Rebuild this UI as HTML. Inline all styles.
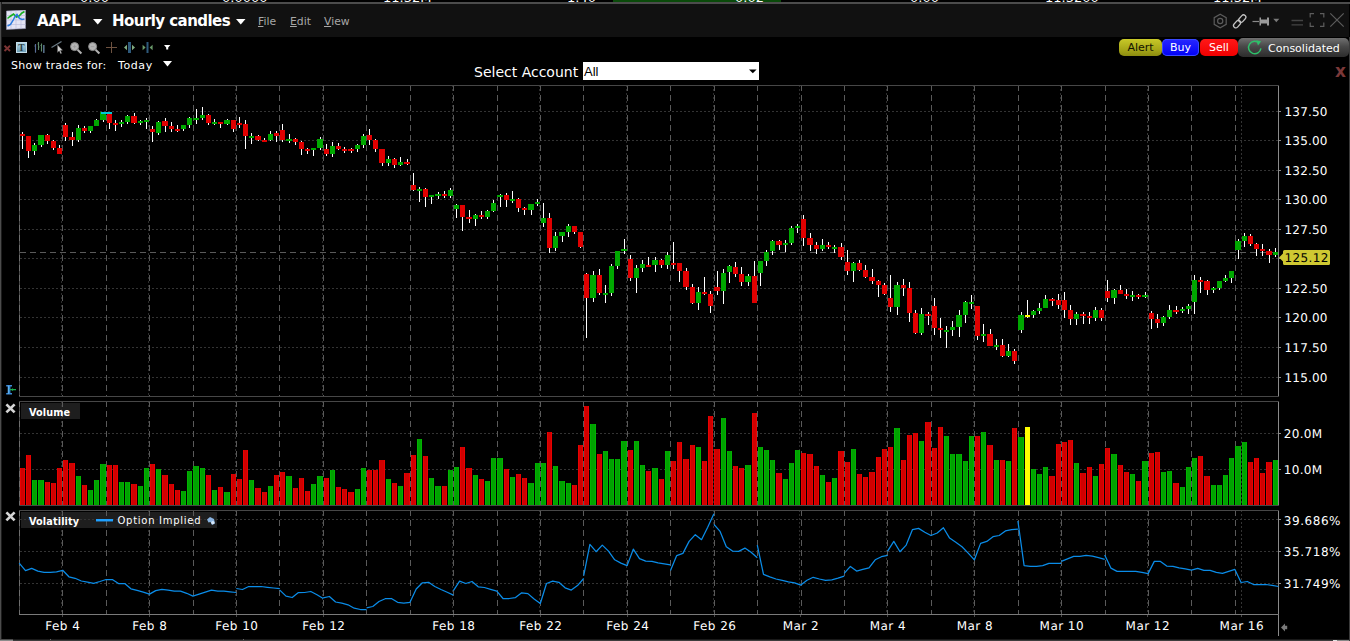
<!DOCTYPE html>
<html><head><meta charset="utf-8"><title>AAPL Hourly candles</title>
<style>
html,body{margin:0;padding:0;background:#000;}
body{width:1350px;height:641px;overflow:hidden;position:relative;font-family:"DejaVu Sans","Liberation Sans",sans-serif;color:#fff;}
.abs{position:absolute;}
.t{position:absolute;white-space:nowrap;line-height:1;}
#topstrip{left:0;top:0;width:1350px;height:2px;background:#000;overflow:hidden;}
#topstrip span{position:absolute;top:-7.6px;font-size:13px;color:#fff;line-height:11px;}
#topline{left:0;top:2px;width:1350px;height:2px;background:#4c4c4c;}
#leftline{left:0;top:2px;width:1px;height:638px;background:#4c4c4c;box-shadow:1px 0 0 #1c1c1c;}
#titlebar{left:1px;top:4px;width:1348px;height:33px;background:#111;}
.menu{font-size:10.8px;color:#a8a8a8;top:16.5px;}
.menu u{text-decoration:underline;}
.btn{position:absolute;top:39px;height:17px;border-radius:5px;font-size:11px;text-align:center;line-height:17px;}
</style></head><body>
<div class="abs" id="topstrip"><span style="left:80px">0.00</span><span style="left:222px">0.0000</span><span style="left:383px">11.32M</span><span style="left:567px">1.40</span><div class="abs" style="left:613px;top:0;width:168px;height:2px;background:#0a4a0a"></div><span style="left:735px">0.02</span><span style="left:910px">0.00</span><span style="left:1045px">11.3200</span><span style="left:1213px">11.32M</span></div>
<div class="abs" id="topline"></div>
<div class="abs" id="titlebar"></div>
<div class="abs" id="leftline"></div>
<!-- app icon -->
<svg class="abs" style="left:6px;top:10px" width="20" height="20" viewBox="0 0 20 20">
<path d="M0.5 1 L19.5 0 L19.5 18.5 L0.5 19.5 Z" fill="#e4e4f4" stroke="#9a9ab8" stroke-width="0.6"/>
<path d="M5 1 V19 M10 .6 V19 M15 .3 V19 M.5 5.5 H19.5 M.5 10 H19.5 M.5 14.5 H19.5" stroke="#b8b8d8" stroke-width=".6" fill="none"/>
<path d="M1.5 8.5 L4 6.5 L7.5 4 L10.5 7 L13 6 L16 3 L18.5 1.5" stroke="#18b020" stroke-width="1.6" fill="none"/>
<path d="M1.5 16 L4.5 14.5 L7 10.5 L9 6.5 L11 4.5 L13.5 8.5 L16 9.5 L18.5 9" stroke="#2a7ae0" stroke-width="1.5" fill="none"/>
</svg>
<div class="t" style="left:37px;top:14px;font-size:15px;font-weight:bold;">AAPL</div>
<svg class="abs" style="left:93px;top:19px" width="10" height="6"><path d="M0 0 H9.5 L4.75 5.5 Z" fill="#fff"/></svg>
<div class="t" style="left:112px;top:14px;font-size:15px;font-weight:bold;letter-spacing:-0.55px;">Hourly candles</div>
<svg class="abs" style="left:236px;top:19px" width="10" height="6"><path d="M0 0 H9.5 L4.75 5.5 Z" fill="#fff"/></svg>
<div class="t menu" style="left:258px"><u>F</u>ile</div>
<div class="t menu" style="left:290px"><u>E</u>dit</div>
<div class="t menu" style="left:324px"><u>V</u>iew</div>
<!-- right title icons -->
<svg class="abs" style="left:1210px;top:10px" width="140" height="22" viewBox="1210 10 140 22" fill="none">
<path d="M1220.2 14.3 L1226.2 17.6 V24.4 L1220.2 27.7 L1214.2 24.4 V17.6 Z" stroke="#5c5c5c" stroke-width="1.2"/>
<circle cx="1220.2" cy="21" r="2.6" stroke="#5c5c5c" stroke-width="1.2"/>
<g stroke="#c4c4c4" stroke-width="1.25"><rect x="-2.3" y="-4.2" width="4.6" height="8.4" rx="2.3" transform="translate(1242.3 18.6) rotate(42)"/><rect x="-2.3" y="-4.2" width="4.6" height="8.4" rx="2.3" transform="translate(1237.1 24.1) rotate(42)"/></g>
<path d="M1252.5 21.5 H1259" stroke="#8a8a8a" stroke-width="1.2"/>
<path d="M1259.5 17.5 H1261 V19.5 H1267 V17.5 H1269 V25.5 H1267 V23.5 H1261 V25.5 H1259.5 Z" fill="#9a9a9a"/>
<path d="M1273.3 18.8 H1279.3 L1276.3 22.3 Z" fill="#7a7a7a"/>
<path d="M1291.5 20.5 H1303 M1291.5 24.8 H1303" stroke="#444" stroke-width="1.3"/>
<path d="M1314 13.6 H1310.2 V17.6 M1320 13.6 H1323.8 V17.6 M1314 26.4 H1310.2 V22.4 M1320 26.4 H1323.8 V22.4" stroke="#5c5c5c" stroke-width="1.2"/>
<path d="M1330.3 13.3 L1343.7 26.7 M1343.7 13.3 L1330.3 26.7" stroke="#5c5c5c" stroke-width="1.2"/>
</svg>
<!-- toolbar -->
<svg class="abs" style="left:0;top:38px" width="180" height="20" viewBox="0 38 180 20" fill="none">
<path d="M4.5 45.8 L10 51 M10 45.8 L4.5 51" stroke="#7c3434" stroke-width="1.9"/>
<defs><linearGradient id="tg" x1="0" y1="0" x2="0" y2="1"><stop offset="0" stop-color="#b4d8e8"/><stop offset="1" stop-color="#6a9cb4"/></linearGradient></defs><rect x="16.5" y="42.5" width="10" height="10" fill="url(#tg)" stroke="#c4dce8" stroke-width="1"/>
<text x="21.5" y="51" font-family="'Liberation Serif',serif" font-size="9.5" font-weight="bold" fill="#2c3c44" text-anchor="middle">T</text>
<path d="M35.5 44 V52.5 M34.5 46 H35.5 M38.5 42 V50 M37.5 44 H38.5 M38.5 47 H39.5 M41.5 43.5 V51.5 M40.5 45.5 H41.5 M43.8 45 V53" stroke="#5f8a6a" stroke-width="1.1"/>
<path d="M35.5 44 V52.5 M43.8 45 V53" stroke="#5a6a9a" stroke-width="1.1"/>
<path d="M51.5 47.5 L61.5 41.5" stroke="#6a7a84" stroke-width="1.2"/>
<path d="M57.5 45 V52.5 L59.2 50.8 L60.6 53.8 L61.7 53.2 L60.4 50.4 L62.6 50.2 Z" fill="#d0d0d0" stroke="#555" stroke-width=".4"/>
<circle cx="74.6" cy="46.6" r="4" fill="#b4b4b4" stroke="#8a8a8a" stroke-width="1"/><path d="M77.6 49.8 L81.4 53.4" stroke="#b0b0b0" stroke-width="2.1"/><path d="M72.8 46.6 H76.4 M74.6 44.8 V48.4" stroke="#9c9c9c" stroke-width=".9"/>
<circle cx="92.6" cy="46.6" r="4" fill="#b4b4b4" stroke="#8a8a8a" stroke-width="1"/><path d="M95.6 49.8 L99.4 53.4" stroke="#b0b0b0" stroke-width="2.1"/><path d="M90.8 46.6 H94.4" stroke="#9c9c9c" stroke-width=".9"/>
<path d="M106 47.5 H117 M111.5 42 V53" stroke="#6e5240" stroke-width="1" shape-rendering="crispEdges"/>
<path d="M129.5 42 V53" stroke="#2e5a7c" stroke-width="3"/><path d="M124 47.5 L127 44.8 V50.2 Z M135 47.5 L132 44.8 V50.2 Z" fill="#80aa80"/>
<path d="M147.5 42 V53" stroke="#2e5a7c" stroke-width="2"/><path d="M145.6 47.5 L142.6 44.8 V50.2 Z M149.6 47.5 L152.6 44.8 V50.2 Z" fill="#6a9a6a"/>
<path d="M164 45 H170.4 L168.2 47.6 V49.6 H166.2 V47.6 Z" fill="#fff"/>
</svg>
<div class="t" style="left:11px;top:59.5px;font-size:11px;letter-spacing:0.33px;">Show trades for:</div>
<div class="t" style="left:118px;top:59.5px;font-size:11px;letter-spacing:0.6px;">Today</div>
<svg class="abs" style="left:163px;top:61px" width="10" height="7"><path d="M0 0 H9 L4.5 5.6 Z" fill="#fff"/></svg>
<!-- select account -->
<div class="t" style="left:474px;top:65px;font-size:14px;">Select Account</div>
<div class="abs" style="left:583px;top:62px;width:176px;height:18px;background:#fff;"></div>
<div class="t" style="left:584px;top:65px;font-size:13px;color:#000;font-family:'Liberation Sans',sans-serif;">All</div>
<svg class="abs" style="left:748px;top:68px" width="10" height="6"><path d="M1 1.5 H8.6 L4.8 5.3 Z" fill="#000"/></svg>
<!-- buttons -->
<div class="btn" style="left:1119px;width:43px;background:linear-gradient(#c8c828,#a8a818 60%,#8c8c10);color:#141400;">Alert</div>
<div class="btn" style="left:1162px;width:37px;background:linear-gradient(#2828ff,#0000f4);color:#fff;box-shadow:inset 0 0 0 1px #3a4aff;">Buy</div>
<div class="btn" style="left:1200px;width:38px;background:linear-gradient(#ff1818,#f00000);color:#fff;">Sell</div>
<div class="btn" style="left:1238px;top:38px;width:111px;height:19px;background:linear-gradient(#707070,#484848 45%,#2c2c2c);color:#fff;"></div>
<svg class="abs" style="left:1246px;top:39px" width="18" height="18" viewBox="0 0 18 18" fill="none"><path d="M13.2 4.2 A6.2 6.2 0 1 0 14.9 9.4" stroke="#2ec06a" stroke-width="1.5"/><path d="M10.2 1.2 L15.2 2.2 L12 6.4 Z" fill="#2ec06a"/></svg>
<div class="t" style="left:1268px;top:42.5px;font-size:11px;">Consolidated</div>
<div class="t" style="left:1335px;top:62.5px;font-size:17px;font-weight:bold;color:#7c3838;">x</div>
<svg width="1350" height="641" viewBox="0 0 1350 641" style="position:absolute;left:0;top:0" shape-rendering="crispEdges">
<defs><linearGradient id="gr" x1="0" x2="1" y1="0" y2="0"><stop offset="0" stop-color="#ea0000"/><stop offset=".2" stop-color="#ea0000"/><stop offset=".2" stop-color="#d00000"/><stop offset=".8" stop-color="#d00000"/><stop offset=".8" stop-color="#ea0000"/></linearGradient><linearGradient id="gg" x1="0" x2="1" y1="0" y2="0"><stop offset="0" stop-color="#00b400"/><stop offset=".2" stop-color="#00b400"/><stop offset=".2" stop-color="#00a200"/><stop offset=".8" stop-color="#00a200"/><stop offset=".8" stop-color="#00b400"/></linearGradient></defs>
<rect x="21" y="403" width="59" height="16" fill="#1e1e1e"/><rect x="21" y="512" width="196" height="16" fill="#1e1e1e"/>
<line x1="20" y1="111.5" x2="1278" y2="111.5" stroke="#333333" stroke-dasharray="2 2"/>
<line x1="20" y1="140.5" x2="1278" y2="140.5" stroke="#333333" stroke-dasharray="2 2"/>
<line x1="20" y1="170.5" x2="1278" y2="170.5" stroke="#333333" stroke-dasharray="2 2"/>
<line x1="20" y1="199.5" x2="1278" y2="199.5" stroke="#333333" stroke-dasharray="2 2"/>
<line x1="20" y1="229.5" x2="1278" y2="229.5" stroke="#333333" stroke-dasharray="2 2"/>
<line x1="20" y1="258.5" x2="1278" y2="258.5" stroke="#333333" stroke-dasharray="2 2"/>
<line x1="20" y1="288.5" x2="1278" y2="288.5" stroke="#333333" stroke-dasharray="2 2"/>
<line x1="20" y1="317.5" x2="1278" y2="317.5" stroke="#333333" stroke-dasharray="2 2"/>
<line x1="20" y1="347.5" x2="1278" y2="347.5" stroke="#333333" stroke-dasharray="2 2"/>
<line x1="20" y1="377.5" x2="1278" y2="377.5" stroke="#333333" stroke-dasharray="2 2"/>
<line x1="20" y1="433.5" x2="1278" y2="433.5" stroke="#333333" stroke-dasharray="2 2"/>
<line x1="20" y1="469.5" x2="1278" y2="469.5" stroke="#333333" stroke-dasharray="2 2"/>
<line x1="20" y1="519.5" x2="1278" y2="519.5" stroke="#333333" stroke-dasharray="2 2"/>
<line x1="20" y1="551.5" x2="1278" y2="551.5" stroke="#333333" stroke-dasharray="2 2"/>
<line x1="20" y1="583.5" x2="1278" y2="583.5" stroke="#333333" stroke-dasharray="2 2"/>
<line x1="20" y1="252.5" x2="1278" y2="252.5" stroke="#5a5a5a" stroke-dasharray="6 4"/>
<line x1="62.5" y1="85" x2="62.5" y2="396" stroke="#5a5a5a" stroke-dasharray="6 4"/>
<line x1="62.5" y1="401" x2="62.5" y2="505" stroke="#5a5a5a" stroke-dasharray="6 4"/>
<line x1="62.5" y1="510" x2="62.5" y2="614" stroke="#5a5a5a" stroke-dasharray="6 4"/>
<line x1="106.5" y1="85" x2="106.5" y2="396" stroke="#5a5a5a" stroke-dasharray="6 4"/>
<line x1="106.5" y1="401" x2="106.5" y2="505" stroke="#5a5a5a" stroke-dasharray="6 4"/>
<line x1="106.5" y1="510" x2="106.5" y2="614" stroke="#5a5a5a" stroke-dasharray="6 4"/>
<line x1="149.5" y1="85" x2="149.5" y2="396" stroke="#5a5a5a" stroke-dasharray="6 4"/>
<line x1="149.5" y1="401" x2="149.5" y2="505" stroke="#5a5a5a" stroke-dasharray="6 4"/>
<line x1="149.5" y1="510" x2="149.5" y2="614" stroke="#5a5a5a" stroke-dasharray="6 4"/>
<line x1="193.5" y1="85" x2="193.5" y2="396" stroke="#5a5a5a" stroke-dasharray="6 4"/>
<line x1="193.5" y1="401" x2="193.5" y2="505" stroke="#5a5a5a" stroke-dasharray="6 4"/>
<line x1="193.5" y1="510" x2="193.5" y2="614" stroke="#5a5a5a" stroke-dasharray="6 4"/>
<line x1="236.5" y1="85" x2="236.5" y2="396" stroke="#5a5a5a" stroke-dasharray="6 4"/>
<line x1="236.5" y1="401" x2="236.5" y2="505" stroke="#5a5a5a" stroke-dasharray="6 4"/>
<line x1="236.5" y1="510" x2="236.5" y2="614" stroke="#5a5a5a" stroke-dasharray="6 4"/>
<line x1="279.5" y1="85" x2="279.5" y2="396" stroke="#5a5a5a" stroke-dasharray="6 4"/>
<line x1="279.5" y1="401" x2="279.5" y2="505" stroke="#5a5a5a" stroke-dasharray="6 4"/>
<line x1="279.5" y1="510" x2="279.5" y2="614" stroke="#5a5a5a" stroke-dasharray="6 4"/>
<line x1="323.5" y1="85" x2="323.5" y2="396" stroke="#5a5a5a" stroke-dasharray="6 4"/>
<line x1="323.5" y1="401" x2="323.5" y2="505" stroke="#5a5a5a" stroke-dasharray="6 4"/>
<line x1="323.5" y1="510" x2="323.5" y2="614" stroke="#5a5a5a" stroke-dasharray="6 4"/>
<line x1="366.5" y1="85" x2="366.5" y2="396" stroke="#5a5a5a" stroke-dasharray="6 4"/>
<line x1="366.5" y1="401" x2="366.5" y2="505" stroke="#5a5a5a" stroke-dasharray="6 4"/>
<line x1="366.5" y1="510" x2="366.5" y2="614" stroke="#5a5a5a" stroke-dasharray="6 4"/>
<line x1="410.5" y1="85" x2="410.5" y2="396" stroke="#5a5a5a" stroke-dasharray="6 4"/>
<line x1="410.5" y1="401" x2="410.5" y2="505" stroke="#5a5a5a" stroke-dasharray="6 4"/>
<line x1="410.5" y1="510" x2="410.5" y2="614" stroke="#5a5a5a" stroke-dasharray="6 4"/>
<line x1="453.5" y1="85" x2="453.5" y2="396" stroke="#5a5a5a" stroke-dasharray="6 4"/>
<line x1="453.5" y1="401" x2="453.5" y2="505" stroke="#5a5a5a" stroke-dasharray="6 4"/>
<line x1="453.5" y1="510" x2="453.5" y2="614" stroke="#5a5a5a" stroke-dasharray="6 4"/>
<line x1="497.5" y1="85" x2="497.5" y2="396" stroke="#5a5a5a" stroke-dasharray="6 4"/>
<line x1="497.5" y1="401" x2="497.5" y2="505" stroke="#5a5a5a" stroke-dasharray="6 4"/>
<line x1="497.5" y1="510" x2="497.5" y2="614" stroke="#5a5a5a" stroke-dasharray="6 4"/>
<line x1="540.5" y1="85" x2="540.5" y2="396" stroke="#5a5a5a" stroke-dasharray="6 4"/>
<line x1="540.5" y1="401" x2="540.5" y2="505" stroke="#5a5a5a" stroke-dasharray="6 4"/>
<line x1="540.5" y1="510" x2="540.5" y2="614" stroke="#5a5a5a" stroke-dasharray="6 4"/>
<line x1="583.5" y1="85" x2="583.5" y2="396" stroke="#5a5a5a" stroke-dasharray="6 4"/>
<line x1="583.5" y1="401" x2="583.5" y2="505" stroke="#5a5a5a" stroke-dasharray="6 4"/>
<line x1="583.5" y1="510" x2="583.5" y2="614" stroke="#5a5a5a" stroke-dasharray="6 4"/>
<line x1="627.5" y1="85" x2="627.5" y2="396" stroke="#5a5a5a" stroke-dasharray="6 4"/>
<line x1="627.5" y1="401" x2="627.5" y2="505" stroke="#5a5a5a" stroke-dasharray="6 4"/>
<line x1="627.5" y1="510" x2="627.5" y2="614" stroke="#5a5a5a" stroke-dasharray="6 4"/>
<line x1="670.5" y1="85" x2="670.5" y2="396" stroke="#5a5a5a" stroke-dasharray="6 4"/>
<line x1="670.5" y1="401" x2="670.5" y2="505" stroke="#5a5a5a" stroke-dasharray="6 4"/>
<line x1="670.5" y1="510" x2="670.5" y2="614" stroke="#5a5a5a" stroke-dasharray="6 4"/>
<line x1="714.5" y1="85" x2="714.5" y2="396" stroke="#5a5a5a" stroke-dasharray="6 4"/>
<line x1="714.5" y1="401" x2="714.5" y2="505" stroke="#5a5a5a" stroke-dasharray="6 4"/>
<line x1="714.5" y1="510" x2="714.5" y2="614" stroke="#5a5a5a" stroke-dasharray="6 4"/>
<line x1="757.5" y1="85" x2="757.5" y2="396" stroke="#5a5a5a" stroke-dasharray="6 4"/>
<line x1="757.5" y1="401" x2="757.5" y2="505" stroke="#5a5a5a" stroke-dasharray="6 4"/>
<line x1="757.5" y1="510" x2="757.5" y2="614" stroke="#5a5a5a" stroke-dasharray="6 4"/>
<line x1="801.5" y1="85" x2="801.5" y2="396" stroke="#5a5a5a" stroke-dasharray="6 4"/>
<line x1="801.5" y1="401" x2="801.5" y2="505" stroke="#5a5a5a" stroke-dasharray="6 4"/>
<line x1="801.5" y1="510" x2="801.5" y2="614" stroke="#5a5a5a" stroke-dasharray="6 4"/>
<line x1="844.5" y1="85" x2="844.5" y2="396" stroke="#5a5a5a" stroke-dasharray="6 4"/>
<line x1="844.5" y1="401" x2="844.5" y2="505" stroke="#5a5a5a" stroke-dasharray="6 4"/>
<line x1="844.5" y1="510" x2="844.5" y2="614" stroke="#5a5a5a" stroke-dasharray="6 4"/>
<line x1="887.5" y1="85" x2="887.5" y2="396" stroke="#5a5a5a" stroke-dasharray="6 4"/>
<line x1="887.5" y1="401" x2="887.5" y2="505" stroke="#5a5a5a" stroke-dasharray="6 4"/>
<line x1="887.5" y1="510" x2="887.5" y2="614" stroke="#5a5a5a" stroke-dasharray="6 4"/>
<line x1="931.5" y1="85" x2="931.5" y2="396" stroke="#5a5a5a" stroke-dasharray="6 4"/>
<line x1="931.5" y1="401" x2="931.5" y2="505" stroke="#5a5a5a" stroke-dasharray="6 4"/>
<line x1="931.5" y1="510" x2="931.5" y2="614" stroke="#5a5a5a" stroke-dasharray="6 4"/>
<line x1="974.5" y1="85" x2="974.5" y2="396" stroke="#5a5a5a" stroke-dasharray="6 4"/>
<line x1="974.5" y1="401" x2="974.5" y2="505" stroke="#5a5a5a" stroke-dasharray="6 4"/>
<line x1="974.5" y1="510" x2="974.5" y2="614" stroke="#5a5a5a" stroke-dasharray="6 4"/>
<line x1="1018.5" y1="85" x2="1018.5" y2="396" stroke="#5a5a5a" stroke-dasharray="6 4"/>
<line x1="1018.5" y1="401" x2="1018.5" y2="505" stroke="#5a5a5a" stroke-dasharray="6 4"/>
<line x1="1018.5" y1="510" x2="1018.5" y2="614" stroke="#5a5a5a" stroke-dasharray="6 4"/>
<line x1="1061.5" y1="85" x2="1061.5" y2="396" stroke="#5a5a5a" stroke-dasharray="6 4"/>
<line x1="1061.5" y1="401" x2="1061.5" y2="505" stroke="#5a5a5a" stroke-dasharray="6 4"/>
<line x1="1061.5" y1="510" x2="1061.5" y2="614" stroke="#5a5a5a" stroke-dasharray="6 4"/>
<line x1="1105.5" y1="85" x2="1105.5" y2="396" stroke="#5a5a5a" stroke-dasharray="6 4"/>
<line x1="1105.5" y1="401" x2="1105.5" y2="505" stroke="#5a5a5a" stroke-dasharray="6 4"/>
<line x1="1105.5" y1="510" x2="1105.5" y2="614" stroke="#5a5a5a" stroke-dasharray="6 4"/>
<line x1="1148.5" y1="85" x2="1148.5" y2="396" stroke="#5a5a5a" stroke-dasharray="6 4"/>
<line x1="1148.5" y1="401" x2="1148.5" y2="505" stroke="#5a5a5a" stroke-dasharray="6 4"/>
<line x1="1148.5" y1="510" x2="1148.5" y2="614" stroke="#5a5a5a" stroke-dasharray="6 4"/>
<line x1="1191.5" y1="85" x2="1191.5" y2="396" stroke="#5a5a5a" stroke-dasharray="6 4"/>
<line x1="1191.5" y1="401" x2="1191.5" y2="505" stroke="#5a5a5a" stroke-dasharray="6 4"/>
<line x1="1191.5" y1="510" x2="1191.5" y2="614" stroke="#5a5a5a" stroke-dasharray="6 4"/>
<line x1="1235.5" y1="85" x2="1235.5" y2="396" stroke="#5a5a5a" stroke-dasharray="6 4"/>
<line x1="1235.5" y1="401" x2="1235.5" y2="505" stroke="#5a5a5a" stroke-dasharray="6 4"/>
<line x1="1235.5" y1="510" x2="1235.5" y2="614" stroke="#5a5a5a" stroke-dasharray="6 4"/>
<line x1="61.5" y1="85" x2="61.5" y2="396" stroke="#2c2c2c" stroke-dasharray="2 2"/>
<line x1="61.5" y1="401" x2="61.5" y2="505" stroke="#2c2c2c" stroke-dasharray="2 2"/>
<line x1="61.5" y1="510" x2="61.5" y2="614" stroke="#2c2c2c" stroke-dasharray="2 2"/>
<line x1="148.5" y1="85" x2="148.5" y2="396" stroke="#2c2c2c" stroke-dasharray="2 2"/>
<line x1="148.5" y1="401" x2="148.5" y2="505" stroke="#2c2c2c" stroke-dasharray="2 2"/>
<line x1="148.5" y1="510" x2="148.5" y2="614" stroke="#2c2c2c" stroke-dasharray="2 2"/>
<line x1="235.5" y1="85" x2="235.5" y2="396" stroke="#2c2c2c" stroke-dasharray="2 2"/>
<line x1="235.5" y1="401" x2="235.5" y2="505" stroke="#2c2c2c" stroke-dasharray="2 2"/>
<line x1="235.5" y1="510" x2="235.5" y2="614" stroke="#2c2c2c" stroke-dasharray="2 2"/>
<line x1="322.5" y1="85" x2="322.5" y2="396" stroke="#2c2c2c" stroke-dasharray="2 2"/>
<line x1="322.5" y1="401" x2="322.5" y2="505" stroke="#2c2c2c" stroke-dasharray="2 2"/>
<line x1="322.5" y1="510" x2="322.5" y2="614" stroke="#2c2c2c" stroke-dasharray="2 2"/>
<line x1="452.5" y1="85" x2="452.5" y2="396" stroke="#2c2c2c" stroke-dasharray="2 2"/>
<line x1="452.5" y1="401" x2="452.5" y2="505" stroke="#2c2c2c" stroke-dasharray="2 2"/>
<line x1="452.5" y1="510" x2="452.5" y2="614" stroke="#2c2c2c" stroke-dasharray="2 2"/>
<line x1="539.5" y1="85" x2="539.5" y2="396" stroke="#2c2c2c" stroke-dasharray="2 2"/>
<line x1="539.5" y1="401" x2="539.5" y2="505" stroke="#2c2c2c" stroke-dasharray="2 2"/>
<line x1="539.5" y1="510" x2="539.5" y2="614" stroke="#2c2c2c" stroke-dasharray="2 2"/>
<line x1="626.5" y1="85" x2="626.5" y2="396" stroke="#2c2c2c" stroke-dasharray="2 2"/>
<line x1="626.5" y1="401" x2="626.5" y2="505" stroke="#2c2c2c" stroke-dasharray="2 2"/>
<line x1="626.5" y1="510" x2="626.5" y2="614" stroke="#2c2c2c" stroke-dasharray="2 2"/>
<line x1="713.5" y1="85" x2="713.5" y2="396" stroke="#2c2c2c" stroke-dasharray="2 2"/>
<line x1="713.5" y1="401" x2="713.5" y2="505" stroke="#2c2c2c" stroke-dasharray="2 2"/>
<line x1="713.5" y1="510" x2="713.5" y2="614" stroke="#2c2c2c" stroke-dasharray="2 2"/>
<line x1="799.5" y1="85" x2="799.5" y2="396" stroke="#2c2c2c" stroke-dasharray="2 2"/>
<line x1="799.5" y1="401" x2="799.5" y2="505" stroke="#2c2c2c" stroke-dasharray="2 2"/>
<line x1="799.5" y1="510" x2="799.5" y2="614" stroke="#2c2c2c" stroke-dasharray="2 2"/>
<line x1="886.5" y1="85" x2="886.5" y2="396" stroke="#2c2c2c" stroke-dasharray="2 2"/>
<line x1="886.5" y1="401" x2="886.5" y2="505" stroke="#2c2c2c" stroke-dasharray="2 2"/>
<line x1="886.5" y1="510" x2="886.5" y2="614" stroke="#2c2c2c" stroke-dasharray="2 2"/>
<line x1="973.5" y1="85" x2="973.5" y2="396" stroke="#2c2c2c" stroke-dasharray="2 2"/>
<line x1="973.5" y1="401" x2="973.5" y2="505" stroke="#2c2c2c" stroke-dasharray="2 2"/>
<line x1="973.5" y1="510" x2="973.5" y2="614" stroke="#2c2c2c" stroke-dasharray="2 2"/>
<line x1="1060.5" y1="85" x2="1060.5" y2="396" stroke="#2c2c2c" stroke-dasharray="2 2"/>
<line x1="1060.5" y1="401" x2="1060.5" y2="505" stroke="#2c2c2c" stroke-dasharray="2 2"/>
<line x1="1060.5" y1="510" x2="1060.5" y2="614" stroke="#2c2c2c" stroke-dasharray="2 2"/>
<line x1="1241.5" y1="85" x2="1241.5" y2="396" stroke="#333333" stroke-dasharray="2 2"/>
<line x1="1241.5" y1="401" x2="1241.5" y2="505" stroke="#333333" stroke-dasharray="2 2"/>
<line x1="1241.5" y1="510" x2="1241.5" y2="614" stroke="#333333" stroke-dasharray="2 2"/>
<line x1="1147.5" y1="85" x2="1147.5" y2="396" stroke="#333333" stroke-dasharray="2 2"/>
<line x1="1147.5" y1="401" x2="1147.5" y2="505" stroke="#333333" stroke-dasharray="2 2"/>
<line x1="1147.5" y1="510" x2="1147.5" y2="614" stroke="#333333" stroke-dasharray="2 2"/>
<rect x="20" y="468" width="5" height="37" fill="url(#gr)"/>
<rect x="26" y="455" width="5" height="50" fill="url(#gr)"/>
<rect x="32" y="480" width="5" height="25" fill="url(#gg)"/>
<rect x="38" y="480" width="6" height="25" fill="url(#gg)"/>
<rect x="45" y="482" width="5" height="23" fill="url(#gr)"/>
<rect x="51" y="483" width="5" height="22" fill="url(#gr)"/>
<rect x="57" y="468" width="5" height="37" fill="url(#gr)"/>
<rect x="63" y="460" width="5" height="45" fill="url(#gr)"/>
<rect x="69" y="463" width="6" height="42" fill="url(#gr)"/>
<rect x="76" y="476" width="5" height="29" fill="url(#gg)"/>
<rect x="82" y="485" width="5" height="20" fill="url(#gr)"/>
<rect x="88" y="490" width="5" height="15" fill="url(#gg)"/>
<rect x="94" y="480" width="5" height="25" fill="url(#gg)"/>
<rect x="100" y="464" width="6" height="41" fill="url(#gg)"/>
<rect x="107" y="465" width="5" height="40" fill="url(#gr)"/>
<rect x="113" y="465" width="5" height="40" fill="url(#gr)"/>
<rect x="119" y="482" width="5" height="23" fill="url(#gg)"/>
<rect x="125" y="482" width="5" height="23" fill="url(#gg)"/>
<rect x="131" y="484" width="6" height="21" fill="url(#gr)"/>
<rect x="138" y="486" width="5" height="19" fill="url(#gg)"/>
<rect x="144" y="468" width="5" height="37" fill="url(#gg)"/>
<rect x="150" y="464" width="5" height="41" fill="url(#gr)"/>
<rect x="156" y="469" width="5" height="36" fill="url(#gg)"/>
<rect x="162" y="475" width="6" height="30" fill="url(#gr)"/>
<rect x="169" y="484" width="5" height="21" fill="url(#gr)"/>
<rect x="175" y="490" width="5" height="15" fill="url(#gr)"/>
<rect x="181" y="491" width="5" height="14" fill="url(#gg)"/>
<rect x="187" y="471" width="5" height="34" fill="url(#gg)"/>
<rect x="193" y="466" width="6" height="39" fill="url(#gg)"/>
<rect x="200" y="468" width="5" height="37" fill="url(#gg)"/>
<rect x="206" y="475" width="5" height="30" fill="url(#gr)"/>
<rect x="212" y="490" width="5" height="15" fill="url(#gg)"/>
<rect x="218" y="487" width="5" height="18" fill="url(#gr)"/>
<rect x="224" y="492" width="6" height="13" fill="url(#gg)"/>
<rect x="231" y="474" width="5" height="31" fill="url(#gr)"/>
<rect x="237" y="479" width="5" height="26" fill="url(#gr)"/>
<rect x="243" y="450" width="5" height="55" fill="url(#gr)"/>
<rect x="249" y="480" width="5" height="25" fill="url(#gg)"/>
<rect x="255" y="488" width="6" height="17" fill="url(#gr)"/>
<rect x="262" y="492" width="5" height="13" fill="url(#gr)"/>
<rect x="268" y="486" width="5" height="19" fill="url(#gg)"/>
<rect x="274" y="475" width="5" height="30" fill="url(#gr)"/>
<rect x="280" y="472" width="5" height="33" fill="url(#gr)"/>
<rect x="286" y="476" width="6" height="29" fill="url(#gg)"/>
<rect x="293" y="488" width="5" height="17" fill="url(#gr)"/>
<rect x="299" y="478" width="5" height="27" fill="url(#gr)"/>
<rect x="305" y="491" width="5" height="14" fill="url(#gr)"/>
<rect x="311" y="484" width="5" height="21" fill="url(#gg)"/>
<rect x="317" y="476" width="6" height="29" fill="url(#gg)"/>
<rect x="324" y="478" width="5" height="27" fill="url(#gr)"/>
<rect x="330" y="470" width="5" height="35" fill="url(#gg)"/>
<rect x="336" y="487" width="5" height="18" fill="url(#gr)"/>
<rect x="342" y="489" width="5" height="16" fill="url(#gr)"/>
<rect x="348" y="492" width="6" height="13" fill="url(#gr)"/>
<rect x="355" y="489" width="5" height="16" fill="url(#gg)"/>
<rect x="361" y="468" width="5" height="37" fill="url(#gg)"/>
<rect x="367" y="470" width="5" height="35" fill="url(#gr)"/>
<rect x="373" y="470" width="5" height="35" fill="url(#gr)"/>
<rect x="379" y="460" width="6" height="45" fill="url(#gr)"/>
<rect x="386" y="479" width="5" height="26" fill="url(#gg)"/>
<rect x="392" y="483" width="5" height="22" fill="url(#gr)"/>
<rect x="398" y="486" width="5" height="19" fill="url(#gg)"/>
<rect x="404" y="473" width="6" height="32" fill="url(#gr)"/>
<rect x="411" y="455" width="5" height="50" fill="url(#gr)"/>
<rect x="417" y="439" width="5" height="66" fill="url(#gg)"/>
<rect x="423" y="456" width="5" height="49" fill="url(#gr)"/>
<rect x="429" y="478" width="5" height="27" fill="url(#gg)"/>
<rect x="435" y="486" width="6" height="19" fill="url(#gg)"/>
<rect x="442" y="486" width="5" height="19" fill="url(#gr)"/>
<rect x="448" y="470" width="5" height="35" fill="url(#gg)"/>
<rect x="454" y="467" width="5" height="38" fill="url(#gg)"/>
<rect x="460" y="447" width="5" height="58" fill="url(#gr)"/>
<rect x="466" y="468" width="6" height="37" fill="url(#gr)"/>
<rect x="473" y="475" width="5" height="30" fill="url(#gg)"/>
<rect x="479" y="479" width="5" height="26" fill="url(#gr)"/>
<rect x="485" y="481" width="5" height="24" fill="url(#gg)"/>
<rect x="491" y="458" width="5" height="47" fill="url(#gg)"/>
<rect x="497" y="458" width="6" height="47" fill="url(#gg)"/>
<rect x="504" y="469" width="5" height="36" fill="url(#gr)"/>
<rect x="510" y="477" width="5" height="28" fill="url(#gg)"/>
<rect x="516" y="474" width="5" height="31" fill="url(#gr)"/>
<rect x="522" y="478" width="5" height="27" fill="url(#gr)"/>
<rect x="528" y="483" width="6" height="22" fill="url(#gg)"/>
<rect x="535" y="463" width="5" height="42" fill="url(#gg)"/>
<rect x="541" y="463" width="5" height="42" fill="url(#gg)"/>
<rect x="547" y="432" width="5" height="73" fill="url(#gr)"/>
<rect x="553" y="466" width="5" height="39" fill="url(#gg)"/>
<rect x="559" y="481" width="6" height="24" fill="url(#gg)"/>
<rect x="566" y="483" width="5" height="22" fill="url(#gg)"/>
<rect x="572" y="485" width="5" height="20" fill="url(#gr)"/>
<rect x="578" y="445" width="5" height="60" fill="url(#gr)"/>
<rect x="584" y="406" width="5" height="99" fill="url(#gr)"/>
<rect x="590" y="424" width="6" height="81" fill="url(#gg)"/>
<rect x="597" y="454" width="5" height="51" fill="url(#gr)"/>
<rect x="603" y="451" width="5" height="54" fill="url(#gg)"/>
<rect x="609" y="459" width="5" height="46" fill="url(#gg)"/>
<rect x="615" y="459" width="5" height="46" fill="url(#gg)"/>
<rect x="621" y="441" width="6" height="64" fill="url(#gg)"/>
<rect x="628" y="450" width="5" height="55" fill="url(#gr)"/>
<rect x="634" y="441" width="5" height="64" fill="url(#gg)"/>
<rect x="640" y="465" width="5" height="40" fill="url(#gg)"/>
<rect x="646" y="471" width="5" height="34" fill="url(#gr)"/>
<rect x="652" y="468" width="6" height="37" fill="url(#gg)"/>
<rect x="659" y="479" width="5" height="26" fill="url(#gr)"/>
<rect x="665" y="451" width="5" height="54" fill="url(#gg)"/>
<rect x="671" y="461" width="5" height="44" fill="url(#gr)"/>
<rect x="677" y="442" width="5" height="63" fill="url(#gr)"/>
<rect x="683" y="459" width="6" height="46" fill="url(#gr)"/>
<rect x="690" y="445" width="5" height="60" fill="url(#gr)"/>
<rect x="696" y="447" width="5" height="58" fill="url(#gg)"/>
<rect x="702" y="461" width="5" height="44" fill="url(#gr)"/>
<rect x="708" y="416" width="5" height="89" fill="url(#gr)"/>
<rect x="714" y="449" width="6" height="56" fill="url(#gr)"/>
<rect x="721" y="418" width="5" height="87" fill="url(#gg)"/>
<rect x="727" y="451" width="5" height="54" fill="url(#gg)"/>
<rect x="733" y="466" width="5" height="39" fill="url(#gr)"/>
<rect x="739" y="468" width="5" height="37" fill="url(#gr)"/>
<rect x="745" y="465" width="6" height="40" fill="url(#gg)"/>
<rect x="752" y="413" width="5" height="92" fill="url(#gr)"/>
<rect x="758" y="447" width="5" height="58" fill="url(#gg)"/>
<rect x="764" y="450" width="5" height="55" fill="url(#gg)"/>
<rect x="770" y="460" width="5" height="45" fill="url(#gg)"/>
<rect x="776" y="473" width="6" height="32" fill="url(#gr)"/>
<rect x="783" y="479" width="5" height="26" fill="url(#gg)"/>
<rect x="789" y="463" width="5" height="42" fill="url(#gg)"/>
<rect x="795" y="450" width="5" height="55" fill="url(#gg)"/>
<rect x="801" y="453" width="5" height="52" fill="url(#gr)"/>
<rect x="807" y="454" width="6" height="51" fill="url(#gr)"/>
<rect x="814" y="466" width="5" height="39" fill="url(#gr)"/>
<rect x="820" y="475" width="5" height="30" fill="url(#gg)"/>
<rect x="826" y="482" width="5" height="23" fill="url(#gr)"/>
<rect x="832" y="478" width="5" height="27" fill="url(#gg)"/>
<rect x="838" y="451" width="6" height="54" fill="url(#gr)"/>
<rect x="845" y="462" width="5" height="43" fill="url(#gr)"/>
<rect x="851" y="449" width="5" height="56" fill="url(#gg)"/>
<rect x="857" y="474" width="5" height="31" fill="url(#gr)"/>
<rect x="863" y="477" width="5" height="28" fill="url(#gr)"/>
<rect x="869" y="472" width="6" height="33" fill="url(#gr)"/>
<rect x="876" y="457" width="5" height="48" fill="url(#gr)"/>
<rect x="882" y="449" width="5" height="56" fill="url(#gr)"/>
<rect x="888" y="447" width="5" height="58" fill="url(#gr)"/>
<rect x="894" y="428" width="6" height="77" fill="url(#gg)"/>
<rect x="901" y="460" width="5" height="45" fill="url(#gr)"/>
<rect x="907" y="435" width="5" height="70" fill="url(#gr)"/>
<rect x="913" y="433" width="5" height="72" fill="url(#gr)"/>
<rect x="919" y="441" width="5" height="64" fill="url(#gg)"/>
<rect x="925" y="422" width="6" height="83" fill="url(#gr)"/>
<rect x="932" y="448" width="5" height="57" fill="url(#gr)"/>
<rect x="938" y="427" width="5" height="78" fill="url(#gr)"/>
<rect x="944" y="436" width="5" height="69" fill="url(#gg)"/>
<rect x="950" y="454" width="5" height="51" fill="url(#gg)"/>
<rect x="956" y="454" width="6" height="51" fill="url(#gg)"/>
<rect x="963" y="461" width="5" height="44" fill="url(#gg)"/>
<rect x="969" y="436" width="5" height="69" fill="url(#gg)"/>
<rect x="975" y="436" width="5" height="69" fill="url(#gr)"/>
<rect x="981" y="432" width="5" height="73" fill="url(#gg)"/>
<rect x="987" y="445" width="6" height="60" fill="url(#gr)"/>
<rect x="994" y="460" width="5" height="45" fill="url(#gg)"/>
<rect x="1000" y="460" width="5" height="45" fill="url(#gr)"/>
<rect x="1006" y="461" width="5" height="44" fill="url(#gg)"/>
<rect x="1012" y="428" width="5" height="77" fill="url(#gr)"/>
<rect x="1018" y="437" width="6" height="68" fill="url(#gg)"/>
<rect x="1025" y="427" width="5" height="78" fill="#ffff00"/>
<rect x="1031" y="469" width="5" height="36" fill="url(#gg)"/>
<rect x="1037" y="474" width="5" height="31" fill="url(#gg)"/>
<rect x="1043" y="467" width="5" height="38" fill="url(#gg)"/>
<rect x="1049" y="476" width="6" height="29" fill="url(#gr)"/>
<rect x="1056" y="444" width="5" height="61" fill="url(#gr)"/>
<rect x="1062" y="442" width="5" height="63" fill="url(#gr)"/>
<rect x="1068" y="440" width="5" height="65" fill="url(#gr)"/>
<rect x="1074" y="463" width="5" height="42" fill="url(#gg)"/>
<rect x="1080" y="473" width="6" height="32" fill="url(#gr)"/>
<rect x="1087" y="467" width="5" height="38" fill="url(#gr)"/>
<rect x="1093" y="476" width="5" height="29" fill="url(#gg)"/>
<rect x="1099" y="464" width="5" height="41" fill="url(#gr)"/>
<rect x="1105" y="448" width="5" height="57" fill="url(#gr)"/>
<rect x="1111" y="454" width="6" height="51" fill="url(#gg)"/>
<rect x="1118" y="465" width="5" height="40" fill="url(#gr)"/>
<rect x="1124" y="472" width="5" height="33" fill="url(#gr)"/>
<rect x="1130" y="474" width="5" height="31" fill="url(#gg)"/>
<rect x="1136" y="481" width="5" height="24" fill="url(#gr)"/>
<rect x="1142" y="461" width="6" height="44" fill="url(#gg)"/>
<rect x="1149" y="453" width="5" height="52" fill="url(#gr)"/>
<rect x="1155" y="452" width="5" height="53" fill="url(#gr)"/>
<rect x="1161" y="472" width="5" height="33" fill="url(#gg)"/>
<rect x="1167" y="471" width="5" height="34" fill="url(#gg)"/>
<rect x="1173" y="483" width="6" height="22" fill="url(#gr)"/>
<rect x="1180" y="487" width="5" height="18" fill="url(#gg)"/>
<rect x="1186" y="467" width="5" height="38" fill="url(#gg)"/>
<rect x="1192" y="458" width="5" height="47" fill="url(#gg)"/>
<rect x="1198" y="456" width="5" height="49" fill="url(#gr)"/>
<rect x="1204" y="476" width="6" height="29" fill="url(#gr)"/>
<rect x="1211" y="485" width="5" height="20" fill="url(#gg)"/>
<rect x="1217" y="485" width="5" height="20" fill="url(#gg)"/>
<rect x="1223" y="475" width="5" height="30" fill="url(#gg)"/>
<rect x="1229" y="458" width="5" height="47" fill="url(#gg)"/>
<rect x="1235" y="446" width="6" height="59" fill="url(#gg)"/>
<rect x="1242" y="442" width="5" height="63" fill="url(#gg)"/>
<rect x="1248" y="462" width="5" height="43" fill="url(#gr)"/>
<rect x="1254" y="458" width="5" height="47" fill="url(#gr)"/>
<rect x="1260" y="473" width="5" height="32" fill="url(#gr)"/>
<rect x="1266" y="462" width="6" height="43" fill="url(#gr)"/>
<rect x="1273" y="460" width="5" height="45" fill="url(#gg)"/>
<rect x="22" y="132" width="1" height="17" fill="#fff"/>
<rect x="20" y="134" width="5" height="2" fill="#e00000"/>
<rect x="28" y="136" width="1" height="22" fill="#fff"/>
<rect x="26" y="136" width="5" height="15" fill="#e00000"/>
<rect x="34" y="143" width="1" height="12" fill="#fff"/>
<rect x="32" y="145" width="5" height="6" fill="#00a800"/>
<rect x="41" y="135" width="1" height="12" fill="#fff"/>
<rect x="38" y="135" width="6" height="10" fill="#00a800"/>
<rect x="47" y="134" width="1" height="10" fill="#fff"/>
<rect x="45" y="135" width="5" height="6" fill="#e00000"/>
<rect x="53" y="140" width="1" height="10" fill="#fff"/>
<rect x="51" y="141" width="5" height="7" fill="#e00000"/>
<rect x="59" y="145" width="1" height="9" fill="#fff"/>
<rect x="57" y="148" width="5" height="6" fill="#e00000"/>
<rect x="65" y="123" width="1" height="18" fill="#fff"/>
<rect x="63" y="125" width="5" height="12" fill="#e00000"/>
<rect x="72" y="132" width="1" height="14" fill="#fff"/>
<rect x="69" y="137" width="6" height="3" fill="#e00000"/>
<rect x="78" y="125" width="1" height="17" fill="#fff"/>
<rect x="76" y="128" width="5" height="12" fill="#00a800"/>
<rect x="84" y="126" width="1" height="7" fill="#fff"/>
<rect x="82" y="128" width="5" height="3" fill="#e00000"/>
<rect x="90" y="126" width="1" height="7" fill="#fff"/>
<rect x="88" y="126" width="5" height="5" fill="#00a800"/>
<rect x="96" y="119" width="1" height="7" fill="#fff"/>
<rect x="94" y="120" width="5" height="6" fill="#00a800"/>
<rect x="103" y="112" width="1" height="10" fill="#fff"/>
<rect x="100" y="112" width="6" height="8" fill="#00a800"/>
<rect x="109" y="114" width="1" height="15" fill="#fff"/>
<rect x="107" y="114" width="5" height="9" fill="#e00000"/>
<rect x="115" y="120" width="1" height="11" fill="#fff"/>
<rect x="113" y="123" width="5" height="2" fill="#e00000"/>
<rect x="121" y="120" width="1" height="7" fill="#fff"/>
<rect x="119" y="122" width="5" height="2" fill="#00a800"/>
<rect x="127" y="115" width="1" height="9" fill="#fff"/>
<rect x="125" y="116" width="5" height="6" fill="#00a800"/>
<rect x="134" y="113" width="1" height="11" fill="#fff"/>
<rect x="131" y="116" width="6" height="7" fill="#e00000"/>
<rect x="140" y="120" width="1" height="5" fill="#fff"/>
<rect x="138" y="121" width="5" height="2" fill="#00a800"/>
<rect x="146" y="118" width="1" height="11" fill="#fff"/>
<rect x="144" y="120" width="5" height="2" fill="#00a800"/>
<rect x="152" y="126" width="1" height="16" fill="#fff"/>
<rect x="150" y="129" width="5" height="3" fill="#e00000"/>
<rect x="158" y="121" width="1" height="14" fill="#fff"/>
<rect x="156" y="122" width="5" height="11" fill="#00a800"/>
<rect x="165" y="118" width="1" height="14" fill="#fff"/>
<rect x="162" y="121" width="6" height="5" fill="#e00000"/>
<rect x="171" y="122" width="1" height="10" fill="#fff"/>
<rect x="169" y="126" width="5" height="3" fill="#e00000"/>
<rect x="177" y="125" width="1" height="7" fill="#fff"/>
<rect x="175" y="129" width="5" height="2" fill="#e00000"/>
<rect x="183" y="125" width="1" height="6" fill="#fff"/>
<rect x="181" y="125" width="5" height="4" fill="#00a800"/>
<rect x="189" y="117" width="1" height="11" fill="#fff"/>
<rect x="187" y="118" width="5" height="7" fill="#00a800"/>
<rect x="196" y="109" width="1" height="15" fill="#fff"/>
<rect x="193" y="118" width="6" height="2" fill="#00a800"/>
<rect x="202" y="107" width="1" height="13" fill="#fff"/>
<rect x="200" y="115" width="5" height="3" fill="#00a800"/>
<rect x="208" y="114" width="1" height="11" fill="#fff"/>
<rect x="206" y="115" width="5" height="8" fill="#e00000"/>
<rect x="214" y="119" width="1" height="6" fill="#fff"/>
<rect x="212" y="122" width="5" height="2" fill="#00a800"/>
<rect x="220" y="122" width="1" height="6" fill="#fff"/>
<rect x="218" y="122" width="5" height="2" fill="#e00000"/>
<rect x="227" y="119" width="1" height="6" fill="#fff"/>
<rect x="224" y="120" width="6" height="4" fill="#00a800"/>
<rect x="233" y="120" width="1" height="12" fill="#fff"/>
<rect x="231" y="120" width="5" height="9" fill="#e00000"/>
<rect x="239" y="117" width="1" height="11" fill="#fff"/>
<rect x="237" y="123" width="5" height="2" fill="#e00000"/>
<rect x="245" y="120" width="1" height="29" fill="#fff"/>
<rect x="243" y="124" width="5" height="12" fill="#e00000"/>
<rect x="251" y="133" width="1" height="11" fill="#fff"/>
<rect x="249" y="136" width="5" height="2" fill="#00a800"/>
<rect x="258" y="135" width="1" height="6" fill="#fff"/>
<rect x="255" y="136" width="6" height="4" fill="#e00000"/>
<rect x="264" y="138" width="1" height="4" fill="#fff"/>
<rect x="262" y="140" width="5" height="2" fill="#e00000"/>
<rect x="270" y="131" width="1" height="10" fill="#fff"/>
<rect x="268" y="134" width="5" height="6" fill="#00a800"/>
<rect x="276" y="131" width="1" height="11" fill="#fff"/>
<rect x="274" y="133" width="5" height="3" fill="#e00000"/>
<rect x="282" y="124" width="1" height="18" fill="#fff"/>
<rect x="280" y="130" width="5" height="10" fill="#e00000"/>
<rect x="289" y="134" width="1" height="9" fill="#fff"/>
<rect x="286" y="139" width="6" height="2" fill="#00a800"/>
<rect x="295" y="138" width="1" height="7" fill="#fff"/>
<rect x="293" y="139" width="5" height="3" fill="#e00000"/>
<rect x="301" y="141" width="1" height="14" fill="#fff"/>
<rect x="299" y="142" width="5" height="7" fill="#e00000"/>
<rect x="307" y="148" width="1" height="6" fill="#fff"/>
<rect x="305" y="149" width="5" height="2" fill="#e00000"/>
<rect x="313" y="148" width="1" height="8" fill="#fff"/>
<rect x="311" y="148" width="5" height="2" fill="#00a800"/>
<rect x="320" y="137" width="1" height="13" fill="#fff"/>
<rect x="317" y="139" width="6" height="9" fill="#00a800"/>
<rect x="326" y="144" width="1" height="12" fill="#fff"/>
<rect x="324" y="149" width="5" height="5" fill="#e00000"/>
<rect x="332" y="142" width="1" height="15" fill="#fff"/>
<rect x="330" y="146" width="5" height="8" fill="#00a800"/>
<rect x="338" y="143" width="1" height="7" fill="#fff"/>
<rect x="336" y="146" width="5" height="3" fill="#e00000"/>
<rect x="344" y="147" width="1" height="6" fill="#fff"/>
<rect x="342" y="149" width="5" height="2" fill="#e00000"/>
<rect x="351" y="148" width="1" height="5" fill="#fff"/>
<rect x="348" y="149" width="6" height="2" fill="#e00000"/>
<rect x="357" y="144" width="1" height="8" fill="#fff"/>
<rect x="355" y="145" width="5" height="4" fill="#00a800"/>
<rect x="363" y="134" width="1" height="14" fill="#fff"/>
<rect x="361" y="136" width="5" height="9" fill="#00a800"/>
<rect x="369" y="129" width="1" height="16" fill="#fff"/>
<rect x="367" y="135" width="5" height="5" fill="#e00000"/>
<rect x="375" y="139" width="1" height="13" fill="#fff"/>
<rect x="373" y="140" width="5" height="9" fill="#e00000"/>
<rect x="382" y="149" width="1" height="17" fill="#fff"/>
<rect x="379" y="149" width="6" height="14" fill="#e00000"/>
<rect x="388" y="156" width="1" height="10" fill="#fff"/>
<rect x="386" y="159" width="5" height="4" fill="#00a800"/>
<rect x="394" y="158" width="1" height="10" fill="#fff"/>
<rect x="392" y="159" width="5" height="6" fill="#e00000"/>
<rect x="400" y="157" width="1" height="9" fill="#fff"/>
<rect x="398" y="162" width="5" height="3" fill="#00a800"/>
<rect x="407" y="159" width="1" height="6" fill="#fff"/>
<rect x="404" y="162" width="6" height="2" fill="#e00000"/>
<rect x="413" y="173" width="1" height="18" fill="#fff"/>
<rect x="411" y="185" width="5" height="5" fill="#e00000"/>
<rect x="419" y="187" width="1" height="15" fill="#fff"/>
<rect x="417" y="189" width="5" height="2" fill="#00a800"/>
<rect x="425" y="188" width="1" height="19" fill="#fff"/>
<rect x="423" y="189" width="5" height="8" fill="#e00000"/>
<rect x="431" y="195" width="1" height="9" fill="#fff"/>
<rect x="429" y="195" width="5" height="2" fill="#00a800"/>
<rect x="438" y="192" width="1" height="7" fill="#fff"/>
<rect x="435" y="194" width="6" height="2" fill="#00a800"/>
<rect x="444" y="191" width="1" height="7" fill="#fff"/>
<rect x="442" y="194" width="5" height="2" fill="#e00000"/>
<rect x="450" y="188" width="1" height="10" fill="#fff"/>
<rect x="448" y="190" width="5" height="6" fill="#00a800"/>
<rect x="456" y="204" width="1" height="14" fill="#fff"/>
<rect x="454" y="205" width="5" height="4" fill="#00a800"/>
<rect x="462" y="205" width="1" height="26" fill="#fff"/>
<rect x="460" y="205" width="5" height="12" fill="#e00000"/>
<rect x="469" y="210" width="1" height="13" fill="#fff"/>
<rect x="466" y="217" width="6" height="2" fill="#e00000"/>
<rect x="475" y="214" width="1" height="12" fill="#fff"/>
<rect x="473" y="215" width="5" height="4" fill="#00a800"/>
<rect x="481" y="211" width="1" height="8" fill="#fff"/>
<rect x="479" y="215" width="5" height="2" fill="#e00000"/>
<rect x="487" y="210" width="1" height="9" fill="#fff"/>
<rect x="485" y="211" width="5" height="6" fill="#00a800"/>
<rect x="493" y="200" width="1" height="12" fill="#fff"/>
<rect x="491" y="203" width="5" height="8" fill="#00a800"/>
<rect x="500" y="194" width="1" height="13" fill="#fff"/>
<rect x="497" y="195" width="6" height="2" fill="#00a800"/>
<rect x="506" y="193" width="1" height="14" fill="#fff"/>
<rect x="504" y="195" width="5" height="5" fill="#e00000"/>
<rect x="512" y="191" width="1" height="12" fill="#fff"/>
<rect x="510" y="199" width="5" height="2" fill="#00a800"/>
<rect x="518" y="198" width="1" height="14" fill="#fff"/>
<rect x="516" y="199" width="5" height="9" fill="#e00000"/>
<rect x="524" y="207" width="1" height="8" fill="#fff"/>
<rect x="522" y="208" width="5" height="2" fill="#e00000"/>
<rect x="531" y="204" width="1" height="11" fill="#fff"/>
<rect x="528" y="204" width="6" height="6" fill="#00a800"/>
<rect x="537" y="199" width="1" height="7" fill="#fff"/>
<rect x="535" y="202" width="5" height="2" fill="#00a800"/>
<rect x="543" y="203" width="1" height="24" fill="#fff"/>
<rect x="541" y="218" width="5" height="5" fill="#00a800"/>
<rect x="549" y="213" width="1" height="40" fill="#fff"/>
<rect x="547" y="218" width="5" height="30" fill="#e00000"/>
<rect x="555" y="232" width="1" height="19" fill="#fff"/>
<rect x="553" y="236" width="5" height="12" fill="#00a800"/>
<rect x="562" y="232" width="1" height="10" fill="#fff"/>
<rect x="559" y="232" width="6" height="4" fill="#00a800"/>
<rect x="568" y="224" width="1" height="13" fill="#fff"/>
<rect x="566" y="226" width="5" height="6" fill="#00a800"/>
<rect x="574" y="226" width="1" height="8" fill="#fff"/>
<rect x="572" y="226" width="5" height="6" fill="#e00000"/>
<rect x="580" y="232" width="1" height="16" fill="#fff"/>
<rect x="578" y="232" width="5" height="15" fill="#e00000"/>
<rect x="586" y="273" width="1" height="65" fill="#fff"/>
<rect x="584" y="274" width="5" height="24" fill="#e00000"/>
<rect x="593" y="271" width="1" height="31" fill="#fff"/>
<rect x="590" y="275" width="6" height="23" fill="#00a800"/>
<rect x="599" y="269" width="1" height="26" fill="#fff"/>
<rect x="597" y="275" width="5" height="18" fill="#e00000"/>
<rect x="605" y="285" width="1" height="18" fill="#fff"/>
<rect x="603" y="293" width="5" height="2" fill="#00a800"/>
<rect x="611" y="264" width="1" height="32" fill="#fff"/>
<rect x="609" y="266" width="5" height="27" fill="#00a800"/>
<rect x="617" y="251" width="1" height="18" fill="#fff"/>
<rect x="615" y="251" width="5" height="15" fill="#00a800"/>
<rect x="624" y="239" width="1" height="15" fill="#fff"/>
<rect x="621" y="249" width="6" height="2" fill="#00a800"/>
<rect x="630" y="255" width="1" height="26" fill="#fff"/>
<rect x="628" y="259" width="5" height="19" fill="#e00000"/>
<rect x="636" y="265" width="1" height="28" fill="#fff"/>
<rect x="634" y="268" width="5" height="10" fill="#00a800"/>
<rect x="642" y="260" width="1" height="12" fill="#fff"/>
<rect x="640" y="264" width="5" height="4" fill="#00a800"/>
<rect x="648" y="257" width="1" height="10" fill="#fff"/>
<rect x="646" y="265" width="5" height="2" fill="#e00000"/>
<rect x="655" y="257" width="1" height="15" fill="#fff"/>
<rect x="652" y="260" width="6" height="5" fill="#00a800"/>
<rect x="661" y="259" width="1" height="9" fill="#fff"/>
<rect x="659" y="260" width="5" height="5" fill="#e00000"/>
<rect x="667" y="252" width="1" height="17" fill="#fff"/>
<rect x="665" y="255" width="5" height="10" fill="#00a800"/>
<rect x="673" y="242" width="1" height="27" fill="#fff"/>
<rect x="671" y="263" width="5" height="2" fill="#e00000"/>
<rect x="679" y="263" width="1" height="19" fill="#fff"/>
<rect x="677" y="263" width="5" height="8" fill="#e00000"/>
<rect x="686" y="268" width="1" height="22" fill="#fff"/>
<rect x="683" y="271" width="6" height="16" fill="#e00000"/>
<rect x="692" y="284" width="1" height="20" fill="#fff"/>
<rect x="690" y="287" width="5" height="16" fill="#e00000"/>
<rect x="698" y="287" width="1" height="23" fill="#fff"/>
<rect x="696" y="292" width="5" height="11" fill="#00a800"/>
<rect x="704" y="277" width="1" height="18" fill="#fff"/>
<rect x="702" y="292" width="5" height="2" fill="#e00000"/>
<rect x="710" y="291" width="1" height="22" fill="#fff"/>
<rect x="708" y="294" width="5" height="12" fill="#e00000"/>
<rect x="717" y="271" width="1" height="24" fill="#fff"/>
<rect x="714" y="287" width="6" height="4" fill="#e00000"/>
<rect x="723" y="269" width="1" height="35" fill="#fff"/>
<rect x="721" y="273" width="5" height="18" fill="#00a800"/>
<rect x="729" y="265" width="1" height="18" fill="#fff"/>
<rect x="727" y="266" width="5" height="6" fill="#00a800"/>
<rect x="735" y="262" width="1" height="15" fill="#fff"/>
<rect x="733" y="267" width="5" height="7" fill="#e00000"/>
<rect x="741" y="267" width="1" height="19" fill="#fff"/>
<rect x="739" y="274" width="5" height="8" fill="#e00000"/>
<rect x="748" y="274" width="1" height="12" fill="#fff"/>
<rect x="745" y="276" width="6" height="6" fill="#00a800"/>
<rect x="754" y="261" width="1" height="42" fill="#fff"/>
<rect x="752" y="276" width="5" height="27" fill="#e00000"/>
<rect x="760" y="261" width="1" height="25" fill="#fff"/>
<rect x="758" y="261" width="5" height="12" fill="#00a800"/>
<rect x="766" y="250" width="1" height="16" fill="#fff"/>
<rect x="764" y="252" width="5" height="9" fill="#00a800"/>
<rect x="772" y="240" width="1" height="15" fill="#fff"/>
<rect x="770" y="241" width="5" height="10" fill="#00a800"/>
<rect x="779" y="240" width="1" height="10" fill="#fff"/>
<rect x="776" y="241" width="6" height="4" fill="#e00000"/>
<rect x="785" y="240" width="1" height="12" fill="#fff"/>
<rect x="783" y="243" width="5" height="2" fill="#00a800"/>
<rect x="791" y="226" width="1" height="19" fill="#fff"/>
<rect x="789" y="228" width="5" height="15" fill="#00a800"/>
<rect x="797" y="224" width="1" height="9" fill="#fff"/>
<rect x="795" y="226" width="5" height="2" fill="#00a800"/>
<rect x="803" y="215" width="1" height="31" fill="#fff"/>
<rect x="801" y="219" width="5" height="19" fill="#e00000"/>
<rect x="810" y="233" width="1" height="18" fill="#fff"/>
<rect x="807" y="238" width="6" height="7" fill="#e00000"/>
<rect x="816" y="242" width="1" height="12" fill="#fff"/>
<rect x="814" y="245" width="5" height="4" fill="#e00000"/>
<rect x="822" y="239" width="1" height="12" fill="#fff"/>
<rect x="820" y="245" width="5" height="4" fill="#00a800"/>
<rect x="828" y="242" width="1" height="7" fill="#fff"/>
<rect x="826" y="245" width="5" height="2" fill="#e00000"/>
<rect x="834" y="245" width="1" height="8" fill="#fff"/>
<rect x="832" y="247" width="5" height="2" fill="#00a800"/>
<rect x="841" y="243" width="1" height="17" fill="#fff"/>
<rect x="838" y="247" width="6" height="10" fill="#e00000"/>
<rect x="847" y="250" width="1" height="25" fill="#fff"/>
<rect x="845" y="262" width="5" height="9" fill="#e00000"/>
<rect x="853" y="262" width="1" height="20" fill="#fff"/>
<rect x="851" y="263" width="5" height="8" fill="#00a800"/>
<rect x="859" y="260" width="1" height="11" fill="#fff"/>
<rect x="857" y="263" width="5" height="7" fill="#e00000"/>
<rect x="865" y="265" width="1" height="13" fill="#fff"/>
<rect x="863" y="270" width="5" height="7" fill="#e00000"/>
<rect x="872" y="269" width="1" height="15" fill="#fff"/>
<rect x="869" y="277" width="6" height="4" fill="#e00000"/>
<rect x="878" y="280" width="1" height="17" fill="#fff"/>
<rect x="876" y="281" width="5" height="4" fill="#e00000"/>
<rect x="884" y="283" width="1" height="12" fill="#fff"/>
<rect x="882" y="285" width="5" height="9" fill="#e00000"/>
<rect x="890" y="275" width="1" height="37" fill="#fff"/>
<rect x="888" y="298" width="5" height="9" fill="#e00000"/>
<rect x="897" y="282" width="1" height="33" fill="#fff"/>
<rect x="894" y="285" width="6" height="22" fill="#00a800"/>
<rect x="903" y="279" width="1" height="17" fill="#fff"/>
<rect x="901" y="285" width="5" height="3" fill="#e00000"/>
<rect x="909" y="282" width="1" height="40" fill="#fff"/>
<rect x="907" y="288" width="5" height="25" fill="#e00000"/>
<rect x="915" y="310" width="1" height="24" fill="#fff"/>
<rect x="913" y="313" width="5" height="20" fill="#e00000"/>
<rect x="921" y="308" width="1" height="27" fill="#fff"/>
<rect x="919" y="314" width="5" height="19" fill="#00a800"/>
<rect x="928" y="312" width="1" height="13" fill="#fff"/>
<rect x="925" y="314" width="6" height="2" fill="#e00000"/>
<rect x="934" y="298" width="1" height="37" fill="#fff"/>
<rect x="932" y="306" width="5" height="22" fill="#e00000"/>
<rect x="940" y="318" width="1" height="20" fill="#fff"/>
<rect x="938" y="328" width="5" height="2" fill="#e00000"/>
<rect x="946" y="326" width="1" height="22" fill="#fff"/>
<rect x="944" y="330" width="5" height="2" fill="#00a800"/>
<rect x="952" y="321" width="1" height="15" fill="#fff"/>
<rect x="950" y="327" width="5" height="3" fill="#00a800"/>
<rect x="959" y="310" width="1" height="27" fill="#fff"/>
<rect x="956" y="315" width="6" height="12" fill="#00a800"/>
<rect x="965" y="301" width="1" height="22" fill="#fff"/>
<rect x="963" y="302" width="5" height="13" fill="#00a800"/>
<rect x="971" y="295" width="1" height="14" fill="#fff"/>
<rect x="969" y="302" width="5" height="2" fill="#00a800"/>
<rect x="977" y="306" width="1" height="34" fill="#fff"/>
<rect x="975" y="306" width="5" height="30" fill="#e00000"/>
<rect x="983" y="324" width="1" height="18" fill="#fff"/>
<rect x="981" y="334" width="5" height="2" fill="#00a800"/>
<rect x="990" y="329" width="1" height="17" fill="#fff"/>
<rect x="987" y="334" width="6" height="12" fill="#e00000"/>
<rect x="996" y="339" width="1" height="11" fill="#fff"/>
<rect x="994" y="345" width="5" height="2" fill="#00a800"/>
<rect x="1002" y="339" width="1" height="18" fill="#fff"/>
<rect x="1000" y="345" width="5" height="11" fill="#e00000"/>
<rect x="1008" y="344" width="1" height="13" fill="#fff"/>
<rect x="1006" y="351" width="5" height="5" fill="#00a800"/>
<rect x="1014" y="349" width="1" height="15" fill="#fff"/>
<rect x="1012" y="351" width="5" height="10" fill="#e00000"/>
<rect x="1021" y="312" width="1" height="21" fill="#fff"/>
<rect x="1018" y="315" width="6" height="15" fill="#00a800"/>
<rect x="1027" y="300" width="1" height="18" fill="#fff"/>
<rect x="1025" y="315" width="5" height="2" fill="#ffff00"/>
<rect x="1033" y="310" width="1" height="8" fill="#fff"/>
<rect x="1031" y="311" width="5" height="4" fill="#00a800"/>
<rect x="1039" y="303" width="1" height="11" fill="#fff"/>
<rect x="1037" y="308" width="5" height="3" fill="#00a800"/>
<rect x="1045" y="295" width="1" height="13" fill="#fff"/>
<rect x="1043" y="299" width="5" height="9" fill="#00a800"/>
<rect x="1052" y="298" width="1" height="8" fill="#fff"/>
<rect x="1049" y="299" width="6" height="2" fill="#e00000"/>
<rect x="1058" y="294" width="1" height="15" fill="#fff"/>
<rect x="1056" y="300" width="5" height="5" fill="#e00000"/>
<rect x="1064" y="292" width="1" height="26" fill="#fff"/>
<rect x="1062" y="300" width="5" height="10" fill="#e00000"/>
<rect x="1070" y="305" width="1" height="20" fill="#fff"/>
<rect x="1068" y="310" width="5" height="9" fill="#e00000"/>
<rect x="1076" y="312" width="1" height="13" fill="#fff"/>
<rect x="1074" y="314" width="5" height="5" fill="#00a800"/>
<rect x="1083" y="312" width="1" height="12" fill="#fff"/>
<rect x="1080" y="314" width="6" height="2" fill="#e00000"/>
<rect x="1089" y="312" width="1" height="12" fill="#fff"/>
<rect x="1087" y="316" width="5" height="2" fill="#e00000"/>
<rect x="1095" y="307" width="1" height="14" fill="#fff"/>
<rect x="1093" y="310" width="5" height="8" fill="#00a800"/>
<rect x="1101" y="308" width="1" height="13" fill="#fff"/>
<rect x="1099" y="310" width="5" height="8" fill="#e00000"/>
<rect x="1107" y="280" width="1" height="22" fill="#fff"/>
<rect x="1105" y="291" width="5" height="7" fill="#e00000"/>
<rect x="1114" y="289" width="1" height="15" fill="#fff"/>
<rect x="1111" y="290" width="6" height="8" fill="#00a800"/>
<rect x="1120" y="285" width="1" height="9" fill="#fff"/>
<rect x="1118" y="290" width="5" height="4" fill="#e00000"/>
<rect x="1126" y="289" width="1" height="10" fill="#fff"/>
<rect x="1124" y="294" width="5" height="2" fill="#e00000"/>
<rect x="1132" y="291" width="1" height="10" fill="#fff"/>
<rect x="1130" y="295" width="5" height="2" fill="#00a800"/>
<rect x="1138" y="294" width="1" height="5" fill="#fff"/>
<rect x="1136" y="295" width="5" height="2" fill="#e00000"/>
<rect x="1145" y="292" width="1" height="6" fill="#fff"/>
<rect x="1142" y="295" width="6" height="2" fill="#00a800"/>
<rect x="1151" y="311" width="1" height="18" fill="#fff"/>
<rect x="1149" y="313" width="5" height="6" fill="#e00000"/>
<rect x="1157" y="314" width="1" height="14" fill="#fff"/>
<rect x="1155" y="319" width="5" height="4" fill="#e00000"/>
<rect x="1163" y="316" width="1" height="10" fill="#fff"/>
<rect x="1161" y="317" width="5" height="6" fill="#00a800"/>
<rect x="1169" y="305" width="1" height="14" fill="#fff"/>
<rect x="1167" y="310" width="5" height="7" fill="#00a800"/>
<rect x="1176" y="306" width="1" height="8" fill="#fff"/>
<rect x="1173" y="310" width="6" height="2" fill="#e00000"/>
<rect x="1182" y="307" width="1" height="6" fill="#fff"/>
<rect x="1180" y="309" width="5" height="2" fill="#00a800"/>
<rect x="1188" y="304" width="1" height="10" fill="#fff"/>
<rect x="1186" y="306" width="5" height="3" fill="#00a800"/>
<rect x="1194" y="275" width="1" height="39" fill="#fff"/>
<rect x="1192" y="280" width="5" height="22" fill="#00a800"/>
<rect x="1200" y="277" width="1" height="16" fill="#fff"/>
<rect x="1198" y="280" width="5" height="2" fill="#e00000"/>
<rect x="1207" y="280" width="1" height="15" fill="#fff"/>
<rect x="1204" y="281" width="6" height="9" fill="#e00000"/>
<rect x="1213" y="287" width="1" height="6" fill="#fff"/>
<rect x="1211" y="288" width="5" height="2" fill="#00a800"/>
<rect x="1219" y="281" width="1" height="9" fill="#fff"/>
<rect x="1217" y="281" width="5" height="7" fill="#00a800"/>
<rect x="1225" y="275" width="1" height="7" fill="#fff"/>
<rect x="1223" y="278" width="5" height="3" fill="#00a800"/>
<rect x="1231" y="271" width="1" height="12" fill="#fff"/>
<rect x="1229" y="271" width="5" height="7" fill="#00a800"/>
<rect x="1238" y="239" width="1" height="20" fill="#fff"/>
<rect x="1235" y="241" width="6" height="9" fill="#00a800"/>
<rect x="1244" y="233" width="1" height="14" fill="#fff"/>
<rect x="1242" y="236" width="5" height="5" fill="#00a800"/>
<rect x="1250" y="234" width="1" height="12" fill="#fff"/>
<rect x="1248" y="236" width="5" height="8" fill="#e00000"/>
<rect x="1256" y="243" width="1" height="13" fill="#fff"/>
<rect x="1254" y="244" width="5" height="5" fill="#e00000"/>
<rect x="1262" y="244" width="1" height="12" fill="#fff"/>
<rect x="1260" y="249" width="5" height="2" fill="#e00000"/>
<rect x="1269" y="249" width="1" height="14" fill="#fff"/>
<rect x="1266" y="251" width="6" height="4" fill="#e00000"/>
<rect x="1275" y="248" width="1" height="9" fill="#fff"/>
<rect x="1273" y="252" width="5" height="3" fill="#00a800"/>
<rect x="101" y="112" width="11" height="2" fill="#00c8d8"/>
<rect x="19" y="85" width="1" height="312" fill="#474747"/>
<line x1="19.5" y1="85" x2="19.5" y2="396" stroke="#6e6e6e" stroke-dasharray="6 4"/>
<rect x="19" y="401" width="1" height="105" fill="#474747"/>
<line x1="19.5" y1="401" x2="19.5" y2="505" stroke="#6e6e6e" stroke-dasharray="6 4"/>
<rect x="19" y="510" width="1" height="105" fill="#474747"/>
<line x1="19.5" y1="510" x2="19.5" y2="614" stroke="#6e6e6e" stroke-dasharray="6 4"/>
<rect x="1278" y="85" width="1" height="312" fill="#8a8a8a"/>
<rect x="1278" y="401" width="1" height="105" fill="#8a8a8a"/>
<rect x="1278" y="510" width="1" height="126" fill="#8a8a8a"/>
<rect x="19" y="85" width="1260" height="1" fill="#474747"/>
<rect x="19" y="396" width="1260" height="1" fill="#474747"/>
<rect x="19" y="401" width="1260" height="1" fill="#474747"/>
<rect x="19" y="505" width="1260" height="1" fill="#474747"/>
<rect x="19" y="510" width="1260" height="1" fill="#474747"/>
<rect x="19" y="614" width="1260" height="1" fill="#7a7a7a"/>
<rect x="1279" y="111" width="2" height="1" fill="#8a8a8a"/>
<rect x="1279" y="140" width="2" height="1" fill="#8a8a8a"/>
<rect x="1279" y="170" width="2" height="1" fill="#8a8a8a"/>
<rect x="1279" y="199" width="2" height="1" fill="#8a8a8a"/>
<rect x="1279" y="229" width="2" height="1" fill="#8a8a8a"/>
<rect x="1279" y="258" width="2" height="1" fill="#8a8a8a"/>
<rect x="1279" y="288" width="2" height="1" fill="#8a8a8a"/>
<rect x="1279" y="317" width="2" height="1" fill="#8a8a8a"/>
<rect x="1279" y="347" width="2" height="1" fill="#8a8a8a"/>
<rect x="1279" y="377" width="2" height="1" fill="#8a8a8a"/>
<rect x="1279" y="433" width="2" height="1" fill="#8a8a8a"/>
<rect x="1279" y="469" width="2" height="1" fill="#8a8a8a"/>
<rect x="1279" y="519" width="2" height="1" fill="#8a8a8a"/>
<rect x="1279" y="551" width="2" height="1" fill="#8a8a8a"/>
<rect x="1279" y="583" width="2" height="1" fill="#8a8a8a"/>
<rect x="62" y="615" width="1" height="2" fill="#474747"/>
<rect x="149" y="615" width="1" height="2" fill="#474747"/>
<rect x="236" y="615" width="1" height="2" fill="#474747"/>
<rect x="323" y="615" width="1" height="2" fill="#474747"/>
<rect x="453" y="615" width="1" height="2" fill="#474747"/>
<rect x="540" y="615" width="1" height="2" fill="#474747"/>
<rect x="627" y="615" width="1" height="2" fill="#474747"/>
<rect x="714" y="615" width="1" height="2" fill="#474747"/>
<rect x="800" y="615" width="1" height="2" fill="#474747"/>
<rect x="887" y="615" width="1" height="2" fill="#474747"/>
<rect x="974" y="615" width="1" height="2" fill="#474747"/>
<rect x="1061" y="615" width="1" height="2" fill="#474747"/>
<rect x="1147" y="615" width="1" height="2" fill="#474747"/>
<rect x="1241" y="615" width="1" height="2" fill="#474747"/>
<path d="M19.2 563.1 L25.5 570.6 L31.7 568.4 L37.9 571.1 L44.1 572.3 L50.3 572.3 L56.5 571.8 L62.7 570.3 L68.9 576.8 L75.1 578.3 L81.3 581.0 L87.5 582.1 L93.7 583.3 L99.9 581.5 L106.1 579.5 L112.3 579.5 L118.5 583.5 L124.7 583.5 L130.9 588.8 L137.1 590.3 L143.3 592.1 L149.5 594.1 L155.7 590.6 L161.9 589.3 L168.1 590.1 L174.3 591.1 L180.5 591.1 L186.7 593.3 L192.9 596.1 L199.1 594.1 L205.3 592.1 L211.5 590.1 L217.7 591.1 L223.9 591.1 L230.1 591.8 L236.3 592.5 M236.3 588.5 L242.5 589.5 L248.7 586.5 L254.9 586.5 L261.1 586.5 L267.4 587.3 L273.6 588.0 L279.8 588.6 M279.8 590.1 L286.0 596.1 L292.2 597.5 L298.4 592.6 L304.6 592.5 L310.8 591.5 L317.0 594.8 L323.2 598.5 M323.2 597.8 L329.4 596.5 L335.6 602.0 L341.8 603.2 L348.0 604.8 L354.2 608.2 L360.4 609.5 L366.6 609.5 M366.6 607.8 L372.8 606.5 L379.0 601.5 L385.2 598.7 L391.4 598.5 L397.6 602.3 L403.8 603.2 L410.0 602.3 L416.2 589.0 L422.4 582.8 L428.6 582.3 L434.8 586.5 L441.0 589.5 L447.2 592.3 L453.4 595.1 M453.4 590.6 L459.6 581.1 L465.8 583.5 L472.0 581.5 L478.2 586.8 L484.4 587.5 L490.6 589.3 L496.8 591.1 L503.0 598.5 L509.2 598.5 L515.5 597.6 L521.7 592.8 L527.9 593.6 L534.1 599.0 L540.3 603.5 L546.5 583.5 L552.7 581.1 L558.9 582.3 L565.1 587.8 L571.3 590.1 L577.5 585.6 L583.7 578.5 M583.7 575.6 L589.9 544.4 L596.1 551.7 L602.3 545.1 L608.5 551.1 L614.7 559.8 L620.9 563.1 L627.1 565.6 L633.3 549.2 L639.5 558.6 L645.7 561.1 L651.9 561.4 L658.1 562.8 L664.3 563.8 L670.5 564.8 M670.5 570.6 L676.7 555.6 L682.9 553.4 L689.1 541.4 L695.3 534.7 L701.5 539.7 L707.7 527.2 L713.9 513.8 M713.9 524.4 L720.1 531.4 L726.3 546.7 L732.5 551.1 L738.7 551.4 L744.9 548.1 L751.1 552.2 L757.3 557.7 M757.3 545.1 L763.5 574.4 L769.8 576.8 L776.0 579.0 L782.2 580.3 L788.4 581.8 L794.6 582.8 L800.8 585.1 L807.0 580.3 L813.2 577.3 L819.4 579.0 L825.6 580.3 L831.8 579.8 L838.0 578.1 L844.2 576.1 M844.2 573.4 L850.4 566.4 L856.6 571.1 L862.8 569.4 L869.0 567.8 L875.2 559.8 L881.4 556.7 L887.6 555.4 M887.6 551.1 L893.8 541.4 L900.0 551.7 L906.2 545.1 L912.4 529.7 L918.6 528.4 L924.8 532.2 L931.0 535.5 L937.2 533.0 L943.4 527.7 L949.6 538.1 L955.8 542.2 L962.0 546.7 L968.2 553.1 L974.4 559.8 L980.6 543.4 L986.8 541.4 L993.0 536.7 L999.2 535.5 L1005.4 530.9 L1011.6 529.7 L1017.9 529.2 M1017.9 521.0 L1024.1 565.6 L1030.3 566.4 L1036.5 566.4 L1042.7 565.6 L1048.9 563.4 L1055.1 563.4 L1061.3 563.4 M1061.3 561.4 L1067.5 558.9 L1073.7 556.4 L1079.9 556.4 L1086.1 555.4 L1092.3 556.1 L1098.5 557.7 L1104.7 559.4 M1104.7 555.1 L1110.9 568.1 L1117.1 571.4 L1123.3 571.4 L1129.5 571.4 L1135.7 571.4 L1141.9 572.4 L1148.1 573.6 L1154.3 561.4 L1160.5 561.4 L1166.7 566.1 L1172.9 566.4 L1179.1 567.8 L1185.3 568.9 L1191.5 570.1 L1197.7 568.4 L1203.9 570.4 L1210.1 570.4 L1216.3 572.3 L1222.5 573.4 L1228.7 571.4 L1234.9 569.4 L1241.1 582.5 L1247.3 581.5 L1253.5 584.5 L1259.8 584.5 L1266.0 584.5 L1272.2 585.3 L1278.4 586.5" fill="none" stroke="#0a8ce8" stroke-width="1.25" stroke-linejoin="round" shape-rendering="geometricPrecision"/>
<g font-family="'DejaVu Sans','Liberation Sans',sans-serif" font-size="12" fill="#fff" shape-rendering="geometricPrecision" text-rendering="geometricPrecision">
<text x="1284.5" y="116" letter-spacing="0.2">137.50</text>
<text x="1284.5" y="145" letter-spacing="0.2">135.00</text>
<text x="1284.5" y="175" letter-spacing="0.2">132.50</text>
<text x="1284.5" y="204" letter-spacing="0.2">130.00</text>
<text x="1284.5" y="234" letter-spacing="0.2">127.50</text>
<text x="1284.5" y="293" letter-spacing="0.2">122.50</text>
<text x="1284.5" y="322" letter-spacing="0.2">120.00</text>
<text x="1284.5" y="352" letter-spacing="0.2">117.50</text>
<text x="1284.5" y="382" letter-spacing="0.2">115.00</text>
<text x="1283.8" y="438" letter-spacing="0.3">20.0M</text>
<text x="1283.8" y="474" letter-spacing="0.3">10.0M</text>
<text x="1283.8" y="525" letter-spacing="0.55">39.686%</text>
<text x="1283.8" y="556" letter-spacing="0.55">35.718%</text>
<text x="1283.8" y="588" letter-spacing="0.55">31.749%</text>
<text x="62.8" y="630" text-anchor="middle" letter-spacing="0.45">Feb 4</text>
<text x="149.8" y="630" text-anchor="middle" letter-spacing="0.45">Feb 8</text>
<text x="236.8" y="630" text-anchor="middle" letter-spacing="0.45">Feb 10</text>
<text x="323.8" y="630" text-anchor="middle" letter-spacing="0.45">Feb 12</text>
<text x="453.8" y="630" text-anchor="middle" letter-spacing="0.45">Feb 18</text>
<text x="540.8" y="630" text-anchor="middle" letter-spacing="0.45">Feb 22</text>
<text x="627.8" y="630" text-anchor="middle" letter-spacing="0.45">Feb 24</text>
<text x="714.8" y="630" text-anchor="middle" letter-spacing="0.45">Feb 26</text>
<text x="800.8" y="630" text-anchor="middle" letter-spacing="0.45">Mar 2</text>
<text x="887.8" y="630" text-anchor="middle" letter-spacing="0.45">Mar 4</text>
<text x="974.8" y="630" text-anchor="middle" letter-spacing="0.45">Mar 8</text>
<text x="1061.8" y="630" text-anchor="middle" letter-spacing="0.45">Mar 10</text>
<text x="1147.8" y="630" text-anchor="middle" letter-spacing="0.45">Mar 12</text>
<text x="1241.8" y="630" text-anchor="middle" letter-spacing="0.45">Mar 16</text>
<path d="M1279 257.5 L1283 253.5 L1283 251.5 Q1283 250 1284.5 250 L1328.5 250 Q1330 250 1330 251.5 L1330 263.5 Q1330 265 1328.5 265 L1284.5 265 Q1283 265 1283 263.5 L1283 261.5 Z" fill="#cfc832"/>
<text x="1284.4" y="262" fill="#000" letter-spacing="0.4">125.12</text>
</g>
<path d="M1281 627.5 L1285 623.5 V625.8 H1287.2 V629.2 H1285 V631.5 Z" fill="#7a7a7a" shape-rendering="geometricPrecision"/>
</svg>
<!-- panel labels -->
<div class="t" style="left:29px;top:407.5px;font-size:9.7px;letter-spacing:0.12px;font-weight:bold;">Volume</div>
<div class="t" style="left:29px;top:516.5px;font-size:9.7px;letter-spacing:0.12px;font-weight:bold;">Volatility</div>
<div class="abs" style="left:96px;top:519px;width:17px;height:2px;background:#1ea0ff;box-shadow:0 1px 0 rgba(30,160,255,.45);"></div>
<div class="t" style="left:117.5px;top:516px;font-size:10px;letter-spacing:0.72px;">Option Implied</div>
<svg class="abs" style="left:205.5px;top:516px" width="10" height="10" viewBox="0 0 10 10"><path d="M1 3.5 L4 1 L8 3 L9 7.5 L6 9 L4.5 6 L2.5 6.5 Z" fill="#8ab4e0"/><circle cx="6.8" cy="6.6" r="1.6" fill="#d8e8f8"/></svg>
<!-- panel close x -->
<svg class="abs" style="left:5px;top:403px" width="12" height="12"><path d="M1.4 1.4 L9.6 9.4 M9.6 1.4 L1.4 9.4" stroke="#d4d4d4" stroke-width="2.7"/></svg>
<svg class="abs" style="left:5px;top:511px" width="12" height="12"><path d="M1.4 1.4 L9.6 9.4 M9.6 1.4 L1.4 9.4" stroke="#d4d4d4" stroke-width="2.7"/></svg>
<!-- small icon left bottom of main -->
<svg class="abs" style="left:5px;top:383px" width="12" height="12"><path d="M1.2 2 H7 V3.6 H5.4 V10 H7 V11.6 H1.2 V10 H2.8 V3.6 H1.2 Z" fill="#3a8cd8"/><path d="M3.4 2.6 V10.8" stroke="#6ab4f0" stroke-width="1"/><path d="M4.6 6.6 H11 M7.5 5.4 V7.8" stroke="#18b050" stroke-width="1.1" fill="none"/></svg>
<div class="abs" style="left:0;top:639px;width:1350px;height:1px;background:#191919;"></div><div class="abs" style="left:0;top:640px;width:1350px;height:1px;background:#3c3c3c;"></div>
<div class="abs" style="left:0;top:639px;width:13px;height:1px;background:#4a4a4a;"></div><div class="abs" style="left:0;top:640px;width:13px;height:1px;background:#8c8c8c;"></div><div class="abs" style="left:1333px;top:640px;width:4px;height:1px;background:#e0e0e0;"></div><div class="abs" style="left:1337px;top:640px;width:12px;height:1px;background:#888;"></div><div class="abs" style="left:50px;top:639px;width:1px;height:1px;background:#666;"></div><div class="abs" style="left:243px;top:639px;width:1px;height:1px;background:#666;"></div>
<div class="abs" style="left:1349px;top:37px;width:1px;height:603px;background:#3a3a3a;"></div>
</body></html>
